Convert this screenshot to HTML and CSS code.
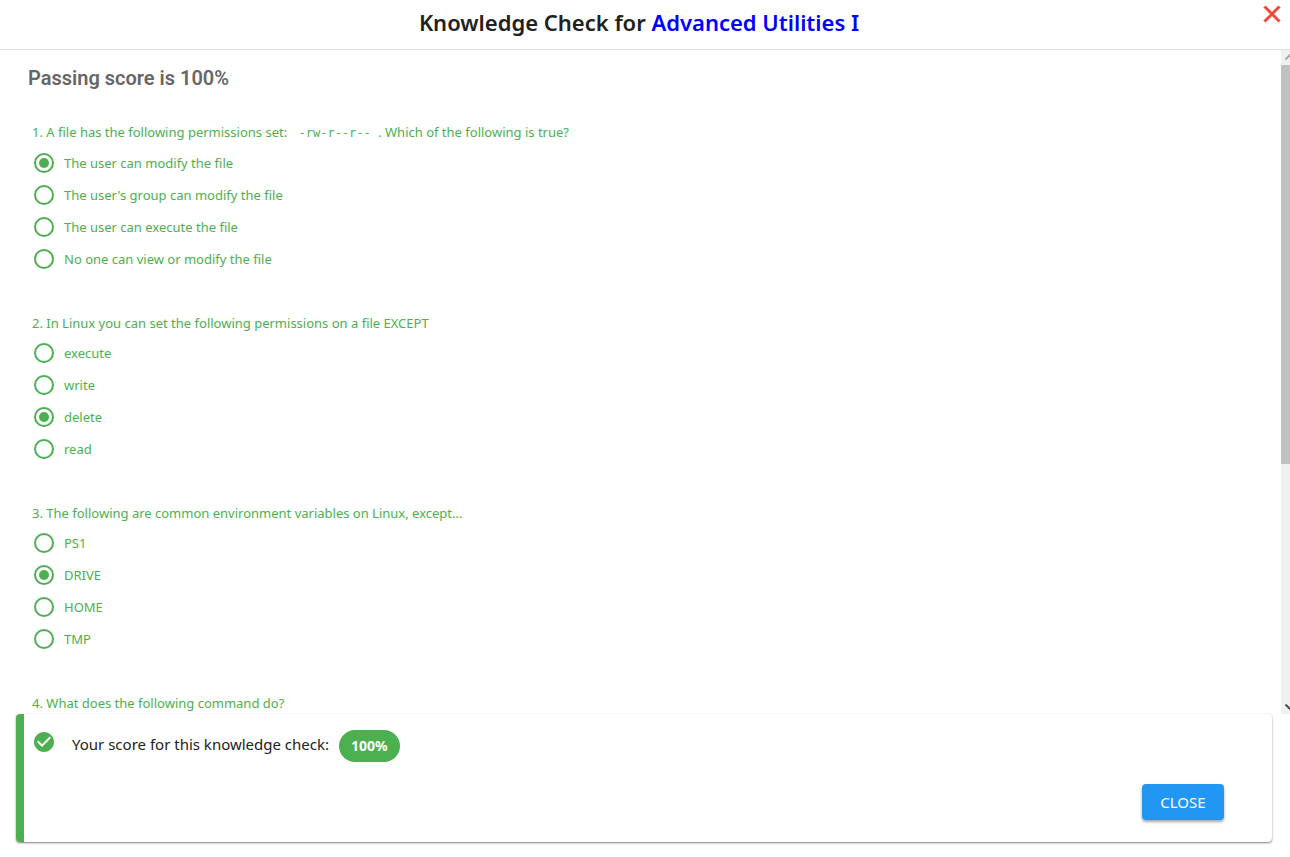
FILE: index.html
```html
<!DOCTYPE html>
<html lang="en">
<head>
<meta charset="utf-8">
<title>Knowledge Check</title>
<link rel="stylesheet" href="styles.css">
</head>
<body>
<header class="header">
  <h1 class="title">Knowledge Check for <a class="title-link" href="#">Advanced Utilities I</a></h1>
  <button class="dismiss" type="button" aria-label="Close dialog">
    <svg viewBox="0 0 24 24" width="28" height="28"><path fill="currentColor" stroke="currentColor" stroke-width=".5" d="M19 6.41L17.59 5 12 10.59 6.41 5 5 6.41 10.59 12 5 17.59 6.41 19 12 13.41 17.59 19 19 17.59 13.41 12z"/></svg>
  </button>
</header>
<div class="body">
  <main class="quiz">
    <h2 class="passing">Passing score is 100%</h2>
    <form class="questions">
      <fieldset class="question">
        <legend class="prompt">1. A file has the following permissions set: <code class="code">-rw-r--r--</code> . Which of the following is true?</legend>
        <label class="option"><input class="radio" type="radio" name="q1" checked>The user can modify the file</label>
        <label class="option"><input class="radio" type="radio" name="q1">The user's group can modify the file</label>
        <label class="option"><input class="radio" type="radio" name="q1">The user can execute the file</label>
        <label class="option"><input class="radio" type="radio" name="q1">No one can view or modify the file</label>
      </fieldset>
      <fieldset class="question">
        <legend class="prompt">2. In Linux you can set the following permissions on a file EXCEPT</legend>
        <label class="option"><input class="radio" type="radio" name="q2">execute</label>
        <label class="option"><input class="radio" type="radio" name="q2">write</label>
        <label class="option"><input class="radio" type="radio" name="q2" checked>delete</label>
        <label class="option"><input class="radio" type="radio" name="q2">read</label>
      </fieldset>
      <fieldset class="question">
        <legend class="prompt">3. The following are common environment variables on Linux, except...</legend>
        <label class="option"><input class="radio" type="radio" name="q3">PS1</label>
        <label class="option"><input class="radio" type="radio" name="q3" checked>DRIVE</label>
        <label class="option"><input class="radio" type="radio" name="q3">HOME</label>
        <label class="option"><input class="radio" type="radio" name="q3">TMP</label>
      </fieldset>
      <fieldset class="question">
        <legend class="prompt">4. What does the following command do?</legend>
      </fieldset>
    </form>
  </main>
  <div class="scrollbar" aria-hidden="true">
    <svg class="arrow" viewBox="0 0 17 15" width="17" height="15"><path fill="none" stroke="#a8a8a8" stroke-width="2" d="M4.500 9.500L8.500 5.500 12.500 9.500"/></svg>
    <div class="track"><div class="thumb"></div></div>
    <svg class="arrow" viewBox="0 0 17 15" width="17" height="15"><path fill="none" stroke="#505050" stroke-width="2" d="M4.500 5.500L8.500 9.500 12.500 5.500"/></svg>
  </div>
</div>
<footer class="result">
  <div class="score-row">
    <svg class="check" viewBox="0 0 24 24" width="24" height="24"><path fill="currentColor" d="M12 2C6.500 2 2 6.500 2 12S6.500 22 12 22 22 17.500 22 12 17.500 2 12 2M10 17L5 12L6.410 10.590L10 14.170L17.590 6.580L19 8L10 17Z"/></svg>
    <p class="score-text">Your score for this knowledge check:</p>
    <span class="chip">100%</span>
  </div>
  <div class="actions"><button class="close" type="button">CLOSE</button></div>
</footer>
</body>
</html>
```

FILE: styles.css
```css
* { box-sizing: border-box; }

body {
  margin: 0;
  height: 100vh;
  display: flex;
  flex-direction: column;
  overflow: hidden;
  background: #fff;
  color: #212121;
  font-family: "Noto Sans", sans-serif;
}

.header {
  display: grid;
  grid-template-columns: 1fr auto 1fr;
  height: 50px;
  padding: 0 4px;
  border-bottom: 1px solid #e0e0e0;
}

.title {
  grid-column: 2;
  margin: 0;
  padding-right: 12px;
  font-size: 22px;
  font-weight: 600;
  line-height: 44px;
}

.title-link { color: #00f; text-decoration: none; }

.dismiss {
  justify-self: end;
  align-self: start;
  display: flex;
  padding: 0;
  border: 0;
  background: none;
  color: #f44336;
}

.body { flex: 1; min-height: 0; display: flex; }

.quiz { flex: 1; min-width: 0; overflow: hidden; padding: 12px 28px 0; }

.passing {
  margin: 0 0 28px;
  color: #666;
  font-family: Roboto, sans-serif;
  font-size: 20px;
  font-weight: 600;
  line-height: 32px;
}

.questions {
  display: flex;
  flex-direction: column;
  gap: 38px;
  padding: 0 4px;
  color: #4caf50;
  font-size: 13px;
}

.question { min-width: 0; margin: 0; padding: 0; border: 0; }

.prompt { padding: 0; margin-bottom: 4px; line-height: 20px; }

.code { padding: 0 4px 0 8px; font-family: "DejaVu Sans Mono", monospace; font-size: 12px; }

.option { display: flex; align-items: center; gap: 10px; height: 32px; padding-left: 2px; }

.radio {
  appearance: none;
  width: 20px;
  height: 20px;
  margin: 0;
  border: 2px solid #4caf50;
  border-radius: 50%;
}

.radio:checked { padding: 3px; background: #4caf50 content-box; }

.scrollbar {
  width: 9px;
  overflow: hidden;
  display: flex;
  flex-direction: column;
  background: #f0f0f0;
}

.arrow { flex: none; }

.track { flex: 1; }

.thumb { height: 63%; background: #c1c1c1; }

.result {
  display: flex;
  flex-direction: column;
  justify-content: space-between;
  min-height: 128px;
  margin: 0 18px 15px 16px;
  padding: 16px 48px 22px 8px;
  border-left: 8px solid #4caf50;
  border-radius: 4px;
  box-shadow: 0 1px 2px rgba(0, 0, 0, .5);
}

.score-row { display: flex; }

.check { color: #4caf50; }

.score-text { margin: 0 10px 0 16px; font-size: 15px; line-height: 28px; }

.chip {
  padding: 0 12px;
  border-radius: 16px;
  background: #4caf50;
  color: #fff;
  font-size: 14px;
  font-weight: 700;
  line-height: 32px;
}

.actions { display: flex; justify-content: flex-end; }

.close {
  min-width: 82px;
  height: 36px;
  padding: 0 16px;
  border: 0;
  border-radius: 4px;
  background: #2196f3;
  box-shadow: 0 2px 3px rgba(0, 0, 0, .35);
  color: #fff;
  font-family: inherit;
  font-size: 15px;
}
```
